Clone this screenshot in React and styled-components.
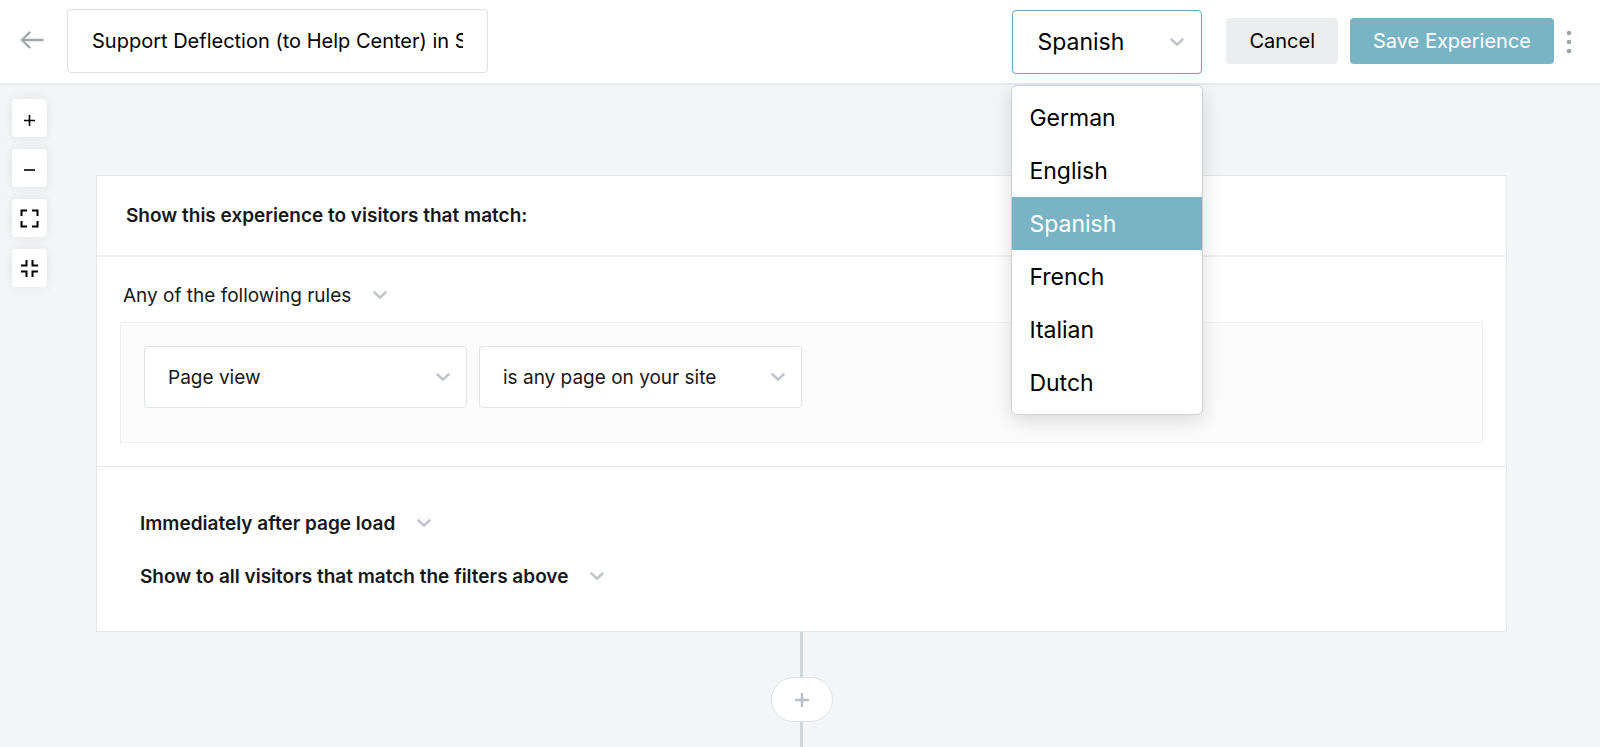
import React from 'react'
import styled, { createGlobalStyle } from 'styled-components'
import { useState } from 'react'

const GlobalStyle = createGlobalStyle`
  * {
    box-sizing: border-box;
  }
  body {
    margin: 0;
    background-color: #f4f5f7;
    color: #16181a;
    font-family: Inter, 'Liberation Sans', sans-serif;
    font-size: 20px;
  }
  button, input, select {
    font: inherit;
    color: inherit;
  }
`

const Page = styled.div`
  min-height: 100vh;
  display: flex;
  flex-direction: column;
`

const Header = styled.header`
  display: flex;
  align-items: center;
  height: 85px;
  padding: 0 28px 2px 20px;
  background-color: #fff;
  border-bottom: 2px solid #e8ebee;
`

const BackLink = styled.a`
  display: flex;
  width: 24px;
  margin-right: 23px;
`

const NameInput = styled.input`
  width: 421px;
  height: 64px;
  padding: 0 24px;
  border: 1px solid #dcdfe5;
  border-radius: 4px;
  background-color: #fff;
  color: #000;
  outline: none;
`

const HeaderActions = styled.div`
  display: flex;
  align-items: center;
  margin-left: auto;
`

const LanguagePicker = styled.div`
  position: relative;
  width: 190px;
  margin-right: 24px;
  padding-top: 2px;
`

const LanguageButton = styled.button`
  display: flex;
  align-items: center;
  justify-content: space-between;
  width: 100%;
  height: 64px;
  padding: 1px 16px 0 24px;
  border: 1px solid #62a9bb;
  border-radius: 4px;
  background-color: #fff;
  color: #000;
  font-size: 23px;
`

const LanguageMenu = styled.ul`
  position: absolute;
  top: 100%;
  left: -1px;
  right: -1px;
  z-index: 10;
  margin: 11px 0 0;
  padding: 5px 0;
  list-style: none;
  background-color: #fff;
  border: 1px solid #cfd1d4;
  border-radius: 6px;
  box-shadow: 0 6px 20px rgba(0, 0, 0, 0.14);
`

const LanguageItem = styled.li`
  height: 53px;
  padding: 1px 17px 0;
  line-height: 52px;
  font-size: 23px;
  color: ${props => (props.$active ? '#fff' : '#000')};
  background-color: ${props => (props.$active ? '#79b4c4' : 'transparent')};
  cursor: pointer;
`

const ActionButton = styled.button`
  height: 46px;
  padding: 0 23px;
  margin-right: 12px;
  border: none;
  border-radius: 4px;
  background-color: ${props => (props.$primary ? '#79b4c4' : '#ecedef')};
  color: ${props => (props.$primary ? '#fff' : '#000')};
`

const MoreButton = styled.button`
  display: flex;
  padding: 0;
  border: none;
  background: none;
`

const Workspace = styled.main`
  flex: 1;
  display: flex;
  align-items: stretch;
  padding: 0 93px 0 12px;
`

const ZoomControls = styled.div`
  display: flex;
  flex-direction: column;
  gap: 12px;
  width: 35px;
  margin-right: 49px;
  padding-top: 14px;
`

const ZoomButton = styled.button`
  display: flex;
  align-items: center;
  justify-content: center;
  height: 38px;
  padding: 0;
  border: none;
  border-radius: 4px;
  background-color: #fff;
  color: #000;
  box-shadow: 0 0 12px rgba(0, 0, 0, 0.08);
`

const Flow = styled.div`
  flex: 1;
  display: flex;
  flex-direction: column;
  align-items: center;
  padding-top: 90px;
`

const Card = styled.section`
  width: 100%;
  background-color: #fff;
  border: 1px solid #e6e7eb;
`

const CardTitle = styled.h1`
  margin: 0;
  padding: 0 29px;
  border-bottom: 2px solid #eeeff1;
  line-height: 79px;
  font-size: 19px;
  font-weight: 600;
`

const RulesSection = styled.div`
  display: flex;
  flex-direction: column;
  gap: 5px;
  padding: 16px 23px 23px;
  border-bottom: 1px solid #e6e7eb;
`

const RulesBox = styled.div`
  display: flex;
  gap: 12px;
  padding: 23px 23px 34px;
  border: 1px solid #f0f0f1;
  background-color: #fcfcfc;
`

const TimingSection = styled.div`
  display: flex;
  flex-direction: column;
  align-items: flex-start;
  gap: 9px;
  padding: 34px 43px 33px;
`

/* select and chevron share one grid cell */
const SelectWrap = styled.div`
  display: grid;
  align-items: center;
  width: ${props => (props.$boxed ? '323px' : 'fit-content')};

  > * {
    grid-area: 1 / 1;
  }
  > svg {
    justify-self: end;
    margin-right: ${props => (props.$boxed ? '16px' : '0')};
    pointer-events: none;
  }
`

const BoxedSelect = styled.select`
  appearance: none;
  width: 100%;
  height: 62px;
  padding: 0 48px 0 23px;
  border: 1px solid #dfe2e6;
  border-radius: 4px;
  background-color: #fff;
  font-size: 19px;
`

const InlineSelect = styled.select`
  appearance: none;
  height: 44px;
  padding: ${props => (props.$strong ? '0 36px 0 0' : '0 36px 0 3px')};
  border: none;
  background: transparent;
  font-size: 19px;
  font-weight: ${props => (props.$strong ? 600 : 400)};
`

const Connector = styled.div`
  width: 3px;
  min-height: 24px;
  height: ${props => (props.$last ? 'auto' : '45px')};
  flex: ${props => (props.$last ? 1 : 'none')};
  background-color: #d0d5dc;
`

const AddStepButton = styled.button`
  display: flex;
  align-items: center;
  justify-content: center;
  width: 62px;
  height: 45px;
  padding: 0;
  border: 1px solid #dfe2e5;
  border-radius: 23px;
  background-color: #fff;
`

const Chevron = () => (
  <svg width="16" height="12" viewBox="0 0 16 12" fill="none" aria-hidden="true">
    <path d="M2.5 3.5L8 8.6L13.5 3.5" stroke="#c0c4cb" strokeWidth="2.6" strokeLinecap="round" />
  </svg>
)

const zoomTools = [
  { label: 'Zoom in', path: 'M4 11.5H15M9.5 6V17', width: 1.6 },
  { label: 'Zoom out', path: 'M4 11H15', width: 1.6 },
  { label: 'Expand', path: 'M7 1.5H1.5V7M12 1.5H17.5V7M1.5 12V17.5H7M17.5 12V17.5H12', width: 2 },
  { label: 'Collapse', path: 'M1 6.5H6.5V1M18 6.5H12.5V1M1 12.5H6.5V18M18 12.5H12.5V18', width: 2 },
]

const languages = ['German', 'English', 'Spanish', 'French', 'Italian', 'Dutch']

function Select({ label, text, boxed, strong }) {
  const Field = boxed ? BoxedSelect : InlineSelect

  return (
    <SelectWrap $boxed={boxed}>
      <Field aria-label={label} $strong={strong}>
        <option>{text}</option>
      </Field>
      <Chevron />
    </SelectWrap>
  )
}

export default function App() {
  const [name, setName] = useState('Support Deflection (to Help Center) in Spanish')
  const [language, setLanguage] = useState('Spanish')
  const [open, setOpen] = useState(true)

  const handleSelect = (item) => {
    setLanguage(item)
    setOpen(false)
  }

  return (
    <>
      <GlobalStyle />
      <Page>
        <Header>
          <BackLink href="#" aria-label="Back">
            <svg width="24" height="20" viewBox="0 0 24 20" fill="none">
              <path d="M22.5 9H2M9.5 1.5L2 9L9.5 16.5" stroke="#9fa8ac" strokeWidth="2.4" strokeLinecap="round" strokeLinejoin="round" />
            </svg>
          </BackLink>
          <NameInput aria-label="Experience name" value={name} onChange={(e) => setName(e.target.value)} />
          <HeaderActions>
            <LanguagePicker>
              <LanguageButton aria-haspopup="listbox" aria-expanded={open} onClick={() => setOpen(!open)}>
                {language}
                <Chevron />
              </LanguageButton>
              {open && (
                <LanguageMenu role="listbox" aria-label="Language">
                  {languages.map(item => (
                    <LanguageItem
                      key={item}
                      role="option"
                      aria-selected={item === language}
                      $active={item === language}
                      onClick={() => handleSelect(item)}
                    >
                      {item}
                    </LanguageItem>
                  ))}
                </LanguageMenu>
              )}
            </LanguagePicker>
            <ActionButton>Cancel</ActionButton>
            <ActionButton $primary>Save Experience</ActionButton>
            <MoreButton aria-label="More">
              <svg width="6" height="26" viewBox="0 0 6 26" fill="#a0a5a8">
                <circle cx="3" cy="5" r="2.3" />
                <circle cx="3" cy="14" r="2.3" />
                <circle cx="3" cy="23" r="2.3" />
              </svg>
            </MoreButton>
          </HeaderActions>
        </Header>
        <Workspace>
          <ZoomControls>
            {zoomTools.map(tool => (
              <ZoomButton key={tool.label} aria-label={tool.label}>
                <svg width="19" height="19" viewBox="0 0 19 19" fill="none" stroke="currentColor" strokeWidth={tool.width}>
                  <path d={tool.path} />
                </svg>
              </ZoomButton>
            ))}
          </ZoomControls>
          <Flow>
            <Card>
              <CardTitle>Show this experience to visitors that match:</CardTitle>
              <RulesSection>
                <Select label="Rule matching" text="Any of the following rules" />
                <RulesBox>
                  <Select boxed label="Rule type" text="Page view" />
                  <Select boxed label="Rule condition" text="is any page on your site" />
                </RulesBox>
              </RulesSection>
              <TimingSection>
                <Select strong label="Timing" text="Immediately after page load" />
                <Select strong label="Audience" text="Show to all visitors that match the filters above" />
              </TimingSection>
            </Card>
            <Connector />
            <AddStepButton aria-label="Add step">
              <svg width="16" height="16" viewBox="0 0 16 16" fill="none">
                <path d="M1 8H15M8 1V15" stroke="#bbbfc7" strokeWidth="2.4" />
              </svg>
            </AddStepButton>
            <Connector $last />
          </Flow>
        </Workspace>
      </Page>
    </>
  )
}
